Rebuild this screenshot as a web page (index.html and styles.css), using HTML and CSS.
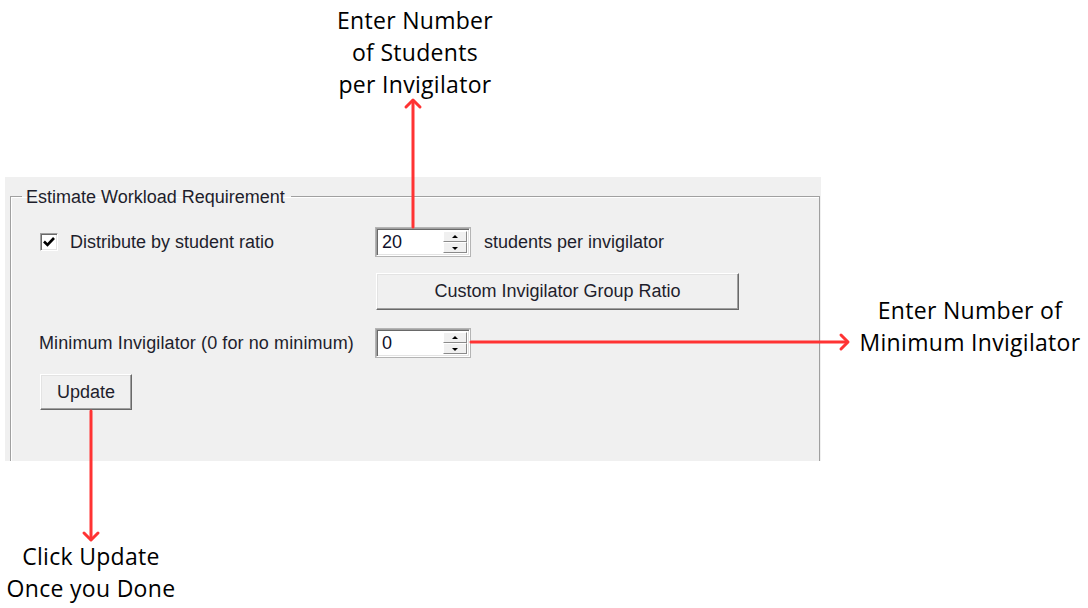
FILE: index.html
```html
<!DOCTYPE html>
<html lang="en">

<head>
    <meta charset="UTF-8">
    <title>Estimate Workload Requirement</title>
    <link rel="stylesheet" href="styles.css">
</head>

<body>
    <div class="canvas">
        <div class="note note-top">Enter Number<br>of Students<br>per Invigilator</div>

        <div class="panel">
            <fieldset class="group">
                <legend>Estimate Workload Requirement</legend>

                <div class="row row-ratio">
                    <label class="check">
                        <span class="box">
                            <svg width="14" height="14" viewBox="0 0 14 14"><path d="M2 6.5 L5.5 10 L12 3" fill="none" stroke="#000" stroke-width="2.6"/></svg>
                        </span>
                        Distribute by student ratio
                    </label>
                    <div class="field">
                        <div class="spin">
                            <span class="val">20</span>
                            <span class="spin-btns">
                                <span class="spin-up"></span>
                                <span class="spin-down"></span>
                            </span>
                        </div>
                        <span class="after">students per invigilator</span>
                    </div>
                </div>

                <div class="row row-custom">
                    <span></span>
                    <button class="btn btn-wide">Custom Invigilator Group Ratio</button>
                </div>

                <div class="row row-min">
                    <span class="min-label">Minimum Invigilator (0 for no minimum)</span>
                    <div class="field">
                        <div class="spin">
                            <span class="val">0</span>
                            <span class="spin-btns">
                                <span class="spin-up"></span>
                                <span class="spin-down"></span>
                            </span>
                        </div>
                    </div>
                </div>

                <div class="row row-update">
                    <button class="btn btn-update">Update</button>
                </div>
            </fieldset>
        </div>

        <div class="note note-right">Enter Number of<br>Minimum Invigilator</div>
        <div class="note note-bottom">Click Update<br>Once you Done</div>

        <!-- red callout arrows -->
        <svg class="callouts" width="1088" height="608" viewBox="0 0 1088 608">
            <g fill="none" stroke="#ff3333" stroke-width="3" stroke-linecap="round" stroke-linejoin="round">
                <path d="M413 101 V227"/>
                <path d="M406 107 L413 100 L420 107"/>
                <path d="M471 342 H846"/>
                <path d="M841 335 L848 342 L841 349"/>
                <path d="M91 411 V539"/>
                <path d="M84 533 L91 540 L98 533"/>
            </g>
        </svg>
    </div>
</body>

</html>
```

FILE: styles.css
```css
* {
    box-sizing: border-box;
}

body {
    margin: 0;
    background: #fff;
}

.canvas {
    position: relative;
    width: 1088px;
    height: 608px;
    overflow: hidden;
    padding-top: 177px;
}

/* annotations */
.note {
    position: absolute;
    font-family: "Open Sans", Lato, sans-serif;
    font-size: 23px;
    letter-spacing: 0.3px;
    line-height: 32px;
    color: #000;
    text-align: center;
    white-space: nowrap;
}

.note-top {
    top: 4px;
    left: 305px;
    width: 220px;
}

.note-right {
    top: 294px;
    left: 850px;
    width: 240px;
}

.note-bottom {
    top: 540px;
    left: 0;
    width: 182px;
}

.callouts {
    position: absolute;
    top: 0;
    left: 0;
    pointer-events: none;
}

/* windows form panel */
.panel {
    width: 816px;
    height: 284px;
    margin-left: 5px;
    padding: 9px 1px 0 5px;
    background: #f0f0f0;
    overflow: hidden;
    font-family: "Liberation Sans", Arial, sans-serif;
    font-size: 18px;
    color: #1e1e2c;
}

.group {
    margin: 0;
    padding: 0 0 0 29px;
    height: 320px;
    border: 1px solid #a0a0a0;
    box-shadow: inset 1px 1px 0 #fff;
}

.group legend {
    margin-left: -18px;
    padding: 2px 6px 0 4px;
    line-height: 19px;
}

.row {
    display: grid;
    grid-template-columns: 336px auto;
    align-items: center;
}

.row-ratio {
    margin-top: 21px;
    height: 28px;
}

.row-custom {
    margin-top: 17px;
    height: 37px;
}

.row-min {
    margin-top: 19px;
    height: 28px;
}

.row-update {
    margin-top: 17px;
    display: block;
}

.check {
    display: flex;
    align-items: center;
    gap: 12px;
}

.box {
    width: 18px;
    height: 18px;
    background: #fff;
    border: 1px solid;
    border-color: #a0a0a0 #fff #fff #a0a0a0;
    box-shadow: inset 1px 1px 0 #696969, inset -1px -1px 0 #e3e3e3;
    display: flex;
    align-items: center;
    justify-content: center;
}

.min-label {
    margin-left: -1px;
    letter-spacing: 0.1px;
}

.field {
    display: flex;
    align-items: center;
    gap: 14px;
}

.spin {
    width: 94px;
    height: 28px;
    display: flex;
    background: #fff;
    border: 1px solid;
    border-color: #a0a0a0 #fff #fff #a0a0a0;
    box-shadow: inset 1px 1px 0 #696969, inset -1px -1px 0 #e3e3e3, 0 0 0 1px #b4b4b4;
    padding: 2px 2px 2px 5px;
}

.val {
    flex: 1;
    line-height: 22px;
    color: #10102a;
}

.spin-btns {
    width: 24px;
    display: flex;
    flex-direction: column;
}

.spin-up,
.spin-down {
    flex: 1;
    background: #f0f0f0;
    border: 1px solid;
    border-color: #fff #8a8a8a #8a8a8a #fff;
    position: relative;
}

.spin-up::after,
.spin-down::after {
    content: "";
    position: absolute;
    left: 50%;
    top: 50%;
    margin-left: -3px;
    border-left: 3px solid transparent;
    border-right: 3px solid transparent;
}

.spin-up::after {
    margin-top: -2px;
    border-bottom: 3px solid #000;
}

.spin-down::after {
    margin-top: -1px;
    border-top: 3px solid #000;
}

.btn {
    font-family: "Liberation Sans", Arial, sans-serif;
    font-size: 18px;
    color: #1e1e2c;
    background: #f0f0f0;
    border: 1px solid;
    border-color: #fff #696969 #696969 #fff;
    box-shadow: inset -1px -1px 0 #a0a0a0, inset 1px 1px 0 #e3e3e3;
    padding: 0;
}

.btn-wide {
    width: 363px;
    height: 37px;
}

.btn-update {
    width: 92px;
    height: 36px;
}
```
